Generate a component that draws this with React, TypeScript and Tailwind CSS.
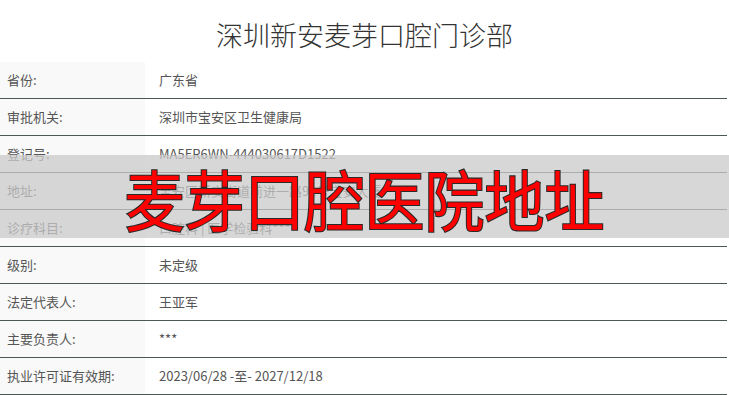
import React from 'react';

const rows: { label: string; value: string }[] = [
  { label: '省份:', value: '广东省' },
  { label: '审批机关:', value: '深圳市宝安区卫生健康局' },
  { label: '登记号:', value: 'MA5ER6WN-444030617D1522' },
  { label: '地址:', value: '宝安区新安街道前进一路91号宝安大厦' },
  { label: '诊疗科目:', value: '口腔科 | 医学检验科***' },
  { label: '级别:', value: '未定级' },
  { label: '法定代表人:', value: '王亚军' },
  { label: '主要负责人:', value: '***' },
  { label: '执业许可证有效期:', value: '2023/06/28 -至- 2027/12/18' },
];

export default function App() {
  return (
    <div
      className="relative w-[729px] h-[395px] overflow-hidden bg-white text-[#555]"
      style={{ fontFamily: '"Noto Sans CJK SC", "Noto Sans", sans-serif' }}
    >
      {/* clinic name */}
      <div className="h-[62px] flex items-center justify-center pt-[8px]">
        <h1 className="text-[27px] font-light text-[#333]">深圳新安麦芽口腔门诊部</h1>
      </div>

      {/* licence info table */}
      <div className="w-[727px]">
        {rows.map((r) => (
          <div key={r.label} className="flex h-[37px] border-b border-[#4b5954]">
            <div className="w-[145px] shrink-0 bg-[#f9f9f9] flex items-center pl-[7px] text-[13px]">
              {r.label}
            </div>
            <div className="flex items-center pl-[14px] text-[13px]">{r.value}</div>
          </div>
        ))}
      </div>

      {/* watermark banner */}
      <div className="absolute left-0 right-0 top-[155px] h-[83px] bg-[#c9c9c9]/75 flex items-center justify-center">
        <span className="text-[60px] font-normal leading-none text-[#ff0000] scale-y-110 [-webkit-text-stroke:2px_#2a2a2a] [paint-order:stroke_fill]">
          麦芽口腔医院地址
        </span>
      </div>
    </div>
  );
}
